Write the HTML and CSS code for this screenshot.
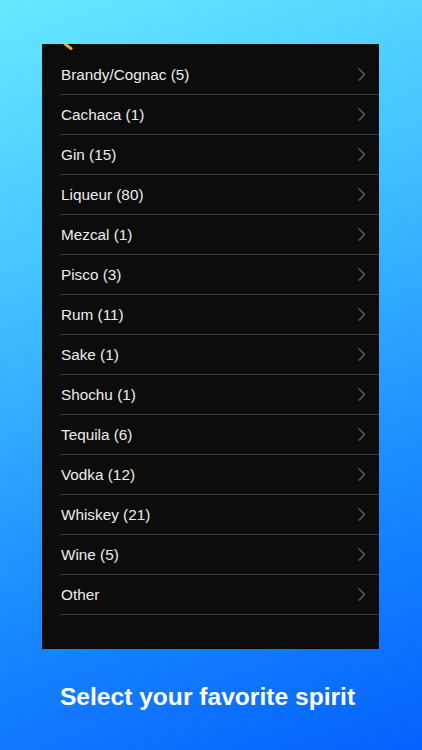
FILE: index.html
```html
<!DOCTYPE html>
<html lang="en">
  <head>
    <meta charset="UTF-8" />
    <meta name="viewport" content="width=device-width, initial-scale=1.0" />
    <title>Spirits</title>
    <link rel="stylesheet" href="styles.css">
  </head>

  <body>
    <div class="screen">
      <div class="phone">
        <svg class="back_tick" width="12" height="8" viewBox="0 0 12 8">
          <path d="M3 0 L9 4.5" stroke="#f5a623" stroke-width="3" stroke-linecap="round" fill="none" />
        </svg>
        <ul class="list">
          <li>Brandy/Cognac (5)</li>
          <li>Cachaca (1)</li>
          <li>Gin (15)</li>
          <li>Liqueur (80)</li>
          <li>Mezcal (1)</li>
          <li>Pisco (3)</li>
          <li>Rum (11)</li>
          <li>Sake (1)</li>
          <li>Shochu (1)</li>
          <li>Tequila (6)</li>
          <li>Vodka (12)</li>
          <li>Whiskey (21)</li>
          <li>Wine (5)</li>
          <li>Other</li>
        </ul>
      </div>
      <h1 class="caption">Select your favorite spirit</h1>
    </div>
    <script>
      // add the grey chevron to every row
      var rows = document.querySelectorAll(".list li");
      for (var i = 0; i < rows.length; i++) {
        var label = document.createElement("span");
        label.className = "label";
        label.textContent = rows[i].textContent;
        rows[i].textContent = "";
        rows[i].appendChild(label);
        rows[i].insertAdjacentHTML(
          "beforeend",
          '<svg class="chev" width="8" height="13" viewBox="0 0 8 13"><path d="M1.2 1 L6.6 6.5 L1.2 12" stroke="#5c5c60" stroke-width="1.4" fill="none" stroke-linecap="round" stroke-linejoin="round"/></svg>'
        );
      }
    </script>
  </body>
</html>
```

FILE: styles.css
```css
* {
  margin: 0;
  padding: 0;
  box-sizing: border-box;
}

html,
body {
  width: 422px;
  height: 750px;
  overflow: hidden;
}

body {
  font-family: "Liberation Sans", Arial, sans-serif;
  background: linear-gradient(160deg, #66e8ff 0%, #45c6fe 30%, #1a88ff 70%, #0462ff 100%);
}

.screen {
  padding-top: 44px;
}

.phone {
  position: relative;
  width: 337px;
  height: 605px;
  margin-left: 42px;
  padding-top: 11px;
  background-color: #0c0c0c;
}

.back_tick {
  position: absolute;
  top: 0;
  left: 20px;
}

li {
  list-style-type: none;
}

.list li {
  display: flex;
  align-items: center;
  justify-content: space-between;
  height: 40px;
  margin-left: 18px;
  padding: 0 13px 0 1px;
  border-bottom: 1px solid #38383a;
  color: #ececec;
  font-size: 15.3px;
}

.chev {
  display: block;
}

.caption {
  margin-top: 34px;
  padding-right: 7px;
  text-align: center;
  color: #fff;
  font-weight: bold;
  font-size: 24.6px;
}
```
